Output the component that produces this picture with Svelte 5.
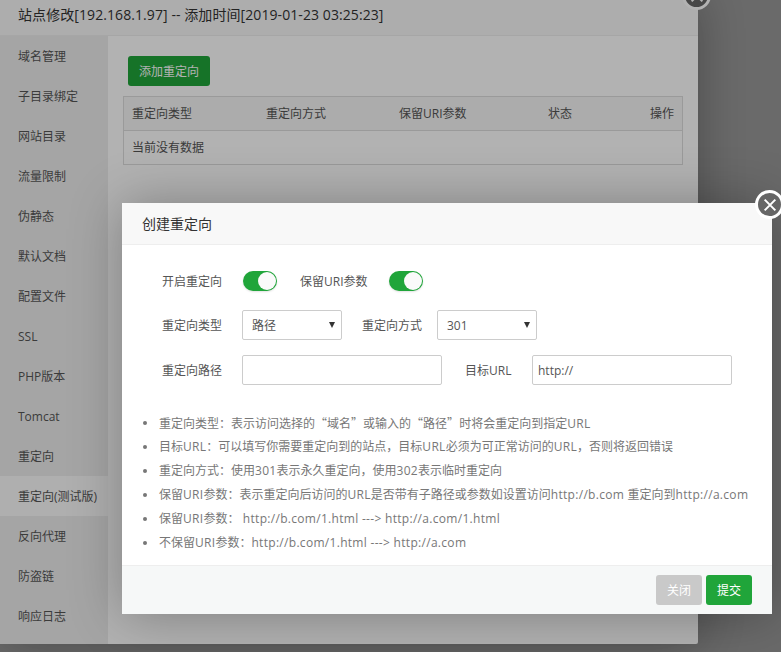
<script>
	const menu = ['域名管理', '子目录绑定', '网站目录', '流量限制', '伪静态', '默认文档', '配置文件', 'SSL', 'PHP版本', 'Tomcat', '重定向', '重定向(测试版)', '反向代理', '防盗链', '响应日志']
	const activeItem = '重定向(测试版)'
	const columns = ['重定向类型', '重定向方式', '保留URI参数', '状态', '操作']
	const tips = [
		'重定向类型：表示访问选择的“域名”或输入的“路径”时将会重定向到指定URL',
		'目标URL：可以填写你需要重定向到的站点，目标URL必须为可正常访问的URL，否则将返回错误',
		'重定向方式：使用301表示永久重定向，使用302表示临时重定向',
		'保留URI参数：表示重定向后访问的URL是否带有子路径或参数如设置访问http://b.com 重定向到http://a.com',
		'保留URI参数： http://b.com/1.html ---> http://a.com/1.html',
		'不保留URI参数：http://b.com/1.html ---> http://a.com'
	]

	// latin runs are a bit wider than the cjk font gives, quotes must be full width
	function runs(text) {
		return text.split(/([\x20-\x7e]+|[“”])/).filter(Boolean).map((t) => ({
			text: t,
			kind: /[“”]/.test(t) ? 'quote' : /[\x20-\x7e]/.test(t) ? 'latin' : ''
		}))
	}
</script>

<div class="page" lang="zh-CN">
	<div class="window">
		<div class="win-title">站点修改[192.168.1.97] -- 添加时间[2019-01-23 03:25:23]</div>
		<div class="win-body">
			<ul class="menu">
				{#each menu as item}
					<li class:active={item === activeItem}>{item}</li>
				{/each}
			</ul>
			<div class="content">
				<button class="btn-add">添加重定向</button>
				<table>
					<thead>
						<tr>
							{#each columns as col}
								<th>{col}</th>
							{/each}
						</tr>
					</thead>
					<tbody>
						<tr><td colspan="5">当前没有数据</td></tr>
					</tbody>
				</table>
			</div>
		</div>
		<span class="close back-close">
			<svg viewBox="0 0 12 12"><path d="M2 2l8 8M10 2l-8 8" /></svg>
		</span>
	</div>

	<div class="shade"></div>

	<div class="modal">
		<div class="modal-title">创建重定向</div>
		<div class="modal-body">
			<div class="form-row first">
				<span class="label">开启重定向</span>
				<span class="toggle"></span>
				<span class="label second">保留URI参数</span>
				<span class="toggle"></span>
			</div>
			<div class="form-row">
				<span class="label">重定向类型</span>
				<span class="select"><select><option>路径</option></select></span>
				<span class="label method">重定向方式</span>
				<span class="select"><select><option>301</option></select></span>
			</div>
			<div class="form-row">
				<span class="label">重定向路径</span>
				<input type="text" />
				<span class="label target">目标URL</span>
				<input type="text" value="http://" />
			</div>
			<ul class="tips">
				{#each tips as tip}
					<li>{#each runs(tip) as run}<span class={run.kind}>{run.text}</span>{/each}</li>
				{/each}
			</ul>
		</div>
		<div class="modal-foot">
			<button class="btn-close">关闭</button>
			<button class="btn-submit">提交</button>
		</div>
		<span class="close modal-close">
			<svg viewBox="0 0 12 12"><path d="M2 2l8 8M10 2l-8 8" /></svg>
		</span>
	</div>
</div>

<style>
	:global(body) {
		margin: 0;
		background: #999;
	}

	.page {
		position: relative;
		width: 781px;
		height: 652px;
		overflow: hidden;
		font-family: "Open Sans", "Noto Sans CJK SC", sans-serif;
		font-size: 12px;
		color: #555;
	}

	/* the site window behind the dialog */
	.window {
		position: absolute;
		left: 0;
		top: -6px;
		width: 698px;
		height: 650px;
		background: #fff;
		border-radius: 0 0 2px 2px;
		box-shadow: 1px 1px 50px rgba(0, 0, 0, .3);
	}

	.win-title {
		height: 42px;
		box-sizing: border-box;
		padding: 6px 18px 0;
		line-height: 30px;
		font-size: 14px;
		letter-spacing: .08px;
		color: #333;
		background: #f8f8f8;
		border-bottom: 1px solid #eee;
	}

	.win-body {
		display: flex;
		height: 608px;
	}

	.menu {
		width: 108px;
		margin: 0;
		padding: 0;
		list-style: none;
		background: #ededed;
	}

	.menu li {
		height: 40px;
		line-height: 42px;
		padding-left: 18px;
		white-space: nowrap;
	}

	.menu li.active {
		background: #fbfbfb;
	}

	.content {
		flex: 1;
		padding: 20px 15px;
	}

	button {
		font-family: inherit;
		font-size: 12px;
		border: 1px solid transparent;
		border-radius: 3px;
		color: #fff;
		padding: 0;
	}

	.btn-add {
		display: block;
		width: 82px;
		height: 30px;
		margin: 0 0 10px 5px;
		background: #20a53a;
	}

	table {
		width: 560px;
		border-collapse: collapse;
		border: 1px solid #ddd;
		table-layout: fixed;
	}

	th, td {
		height: 31px;
		padding: 0 8px 2px;
		font-weight: 400;
		text-align: left;
		border-bottom: 1px solid #ddd;
	}

	th {
		background: #f6f6f6;
	}

	th:nth-child(1) {
		width: 118px;
	}

	th:nth-child(2) {
		width: 117px;
	}

	th:nth-child(3) {
		width: 133px;
	}

	th:nth-child(4) {
		width: 85px;
	}

	th:last-child {
		text-align: right;
	}

	.shade {
		position: absolute;
		inset: 0;
		background: rgba(0, 0, 0, .3);
	}

	/* dialog */
	.modal {
		position: absolute;
		left: 122px;
		top: 203px;
		width: 650px;
		height: 411px;
		display: flex;
		flex-direction: column;
		background: #fff;
		box-shadow: 1px 1px 50px rgba(0, 0, 0, .3);
	}

	.modal-title {
		height: 42px;
		box-sizing: border-box;
		padding-left: 20px;
		line-height: 42px;
		font-size: 14px;
		color: #333;
		background: #f8f8f8;
		border-bottom: 1px solid #eee;
	}

	.modal-body {
		flex: 1;
		padding: 10px 0 0 40px;
	}

	.form-row {
		display: flex;
		align-items: center;
		height: 30px;
		margin-bottom: 15px;
	}

	.form-row.first {
		margin-top: 11px;
		margin-bottom: 14px;
	}

	.label {
		width: 60px;
		margin-right: 20px;
		white-space: nowrap;
	}

	.label.second {
		width: 68px;
		margin: 0 20px 0 24px;
	}

	.label.method {
		margin: 0 15px 0 20px;
	}

	.label.target {
		width: 47px;
		margin: 0 20px 0 23px;
	}

	.toggle {
		position: relative;
		display: block;
		width: 34px;
		height: 20px;
		margin-left: 1px;
		margin-right: -1px;
		border-radius: 10px;
		background: #20a53a;
		box-shadow: 0 1px 2px rgba(0, 0, 0, .12);
	}

	.toggle::after {
		content: "";
		position: absolute;
		right: 1px;
		top: 1px;
		width: 18px;
		height: 18px;
		border-radius: 50%;
		background: #fafafa;
	}

	.select {
		position: relative;
		display: block;
		width: 100px;
		height: 30px;
	}

	.select::after {
		content: "";
		position: absolute;
		right: 7px;
		top: 12px;
		border-left: 3px solid transparent;
		border-right: 3px solid transparent;
		border-top: 6px solid #333;
	}

	select, input {
		display: block;
		box-sizing: border-box;
		height: 30px;
		border: 1px solid #ccc;
		border-radius: 2px;
		background: #fff;
		font-family: inherit;
		font-size: 12px;
		color: #555;
		outline: none;
	}

	select {
		width: 100%;
		padding: 0 0 0 9px;
		appearance: none;
	}

	input {
		width: 200px;
		padding: 0 5px;
	}

	.tips {
		margin: 26px 0 0 -3px;
		padding: 0;
		list-style: none;
		color: #777;
	}

	.tips li {
		position: relative;
		height: 24px;
		line-height: 24px;
		white-space: nowrap;
	}

	.tips li::before {
		content: "";
		position: absolute;
		left: -16px;
		top: 10px;
		width: 4px;
		height: 4px;
		border-radius: 50%;
		background: #777;
	}

	.tips .latin {
		letter-spacing: .3px;
	}

	.tips .quote {
		font-family: "Noto Sans CJK SC", sans-serif;
	}

	.modal-foot {
		display: flex;
		justify-content: flex-end;
		gap: 4px;
		height: 49px;
		box-sizing: border-box;
		padding: 9px 20px 0 0;
		background: #f6f8f8;
		border-top: 1px solid #eee;
	}

	.modal-foot button {
		width: 46px;
		height: 30px;
	}

	.btn-close {
		background: #c9c9c9;
	}

	.btn-submit {
		background: #20a53a;
	}

	.close {
		position: absolute;
		box-sizing: border-box;
		width: 29px;
		height: 29px;
		border-radius: 50%;
		border: 3px solid #fff;
		background: #666;
		display: flex;
		align-items: center;
		justify-content: center;
	}

	.close svg {
		width: 16px;
		height: 16px;
	}

	.close path {
		fill: none;
		stroke: #fff;
		stroke-width: 1.5;
	}

	.back-close {
		right: -13px;
		top: -13px;
	}

	.modal-close {
		right: -12px;
		top: -13px;
	}
</style>
